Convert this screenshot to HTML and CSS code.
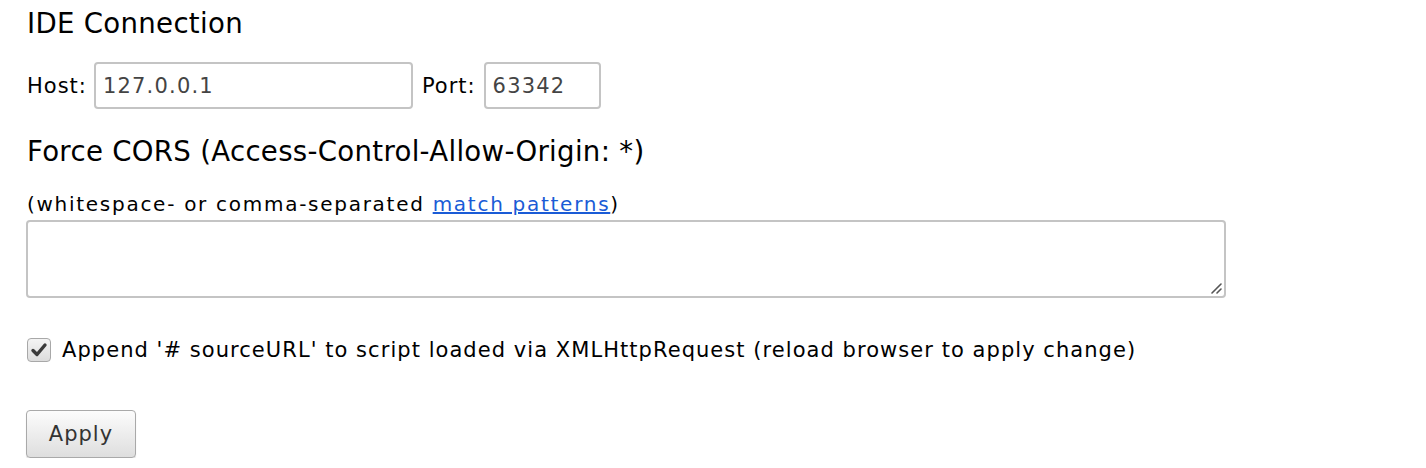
FILE: index.html
```html
<!DOCTYPE html>
<html>
<head>
<meta charset="utf-8">
<link rel="stylesheet" href="styles.css">
</head>
<body>
<div class="page">
  <h2 class="title">IDE Connection</h2>
  <div class="row">
    <label class="lbl">Host:</label>
    <span class="field host">127.0.0.1</span>
    <label class="lbl port-lbl">Port:</label>
    <span class="field port">63342</span>
  </div>
  <h2 class="title cors">Force CORS (Access-Control-Allow-Origin: *)</h2>
  <p class="hint">(whitespace- or comma-separated <a href="#" class="link">match patterns</a>)</p>
  <div class="textarea">
    <svg class="grip" width="12" height="12" viewBox="0 0 12 12"><path d="M11 2 L2 11 M11 7 L7 11" stroke="#555" stroke-width="1.6" stroke-linecap="round"/></svg>
  </div>
  <div class="check-row">
    <span class="checkbox"><svg width="18" height="16" viewBox="0 0 18 16"><path d="M3 8.5 L7 12.5 L15 3" fill="none" stroke="#3a3a3a" stroke-width="3.4" stroke-linecap="round" stroke-linejoin="round"/></svg></span>
    <span class="check-text">Append '# sourceURL' to script loaded via XMLHttpRequest (reload browser to apply change)</span>
  </div>
  <div class="btn-row"><span class="btn">Apply</span></div>
</div>
</body>
</html>
```
FILE: styles.css
```css
html, body {
  margin: 0;
  padding: 0;
  background: #fff;
}
body {
  font-family: "DejaVu Sans", "Liberation Sans", sans-serif;
  color: #000;
}
.page {
  padding: 7px 0 0 27px;
  display: flex;
  flex-direction: column;
  align-items: flex-start;
}
.title {
  margin: 0;
  font-weight: normal;
  font-size: 27.6px;
  letter-spacing: 0.3px;
  line-height: 34px;
}
.row {
  display: flex;
  align-items: center;
  margin-top: 21px;
  font-size: 21px;
  letter-spacing: 1px;
}
.lbl {
  margin-right: 7px;
}
.port-lbl {
  margin-left: 9px;
  margin-right: 8px;
}
.field {
  box-sizing: border-box;
  height: 47px;
  border: 2px solid #c4c4c4;
  border-radius: 4px;
  padding: 0 7px;
  display: flex;
  align-items: center;
  color: #444;
  font-size: 21px;
  letter-spacing: 1.2px;
}
.host { width: 319px; }
.port { width: 117px; }
.cors {
  margin-top: 26px;
}
.hint {
  margin: 23px 0 0 0;
  font-size: 20px;
  letter-spacing: 1.72px;
  line-height: 24px;
}
.link {
  color: #1a5bd6;
  text-decoration: underline;
}
.textarea {
  box-sizing: border-box;
  margin-left: -1px;
  margin-top: 4px;
  width: 1200px;
  height: 78px;
  border: 2px solid #c4c4c4;
  border-radius: 4px;
  position: relative;
}
.grip {
  position: absolute;
  right: 2px;
  bottom: 2px;
}
.check-row {
  display: flex;
  align-items: center;
  margin-top: 40px;
  font-size: 21px;
  letter-spacing: 1.05px;
}
.checkbox {
  box-sizing: border-box;
  width: 24px;
  height: 24px;
  border: 1px solid #a8a8a8;
  border-radius: 4px;
  background: linear-gradient(#f4f4f4, #dcdcdc);
  display: flex;
  align-items: center;
  justify-content: center;
  margin-right: 11px;
}
.btn-row {
  margin-top: 48px;
}
.btn {
  box-sizing: border-box;
  margin-left: -1px;
  width: 110px;
  height: 48px;
  border: 1px solid #a9a9a9;
  border-radius: 4px;
  background: linear-gradient(#fcfcfc, #dedede);
  display: flex;
  align-items: center;
  justify-content: center;
  font-size: 21px;
  letter-spacing: 1px;
  color: #333;
  box-shadow: 0 1px 1px rgba(0,0,0,0.15);
}
```
